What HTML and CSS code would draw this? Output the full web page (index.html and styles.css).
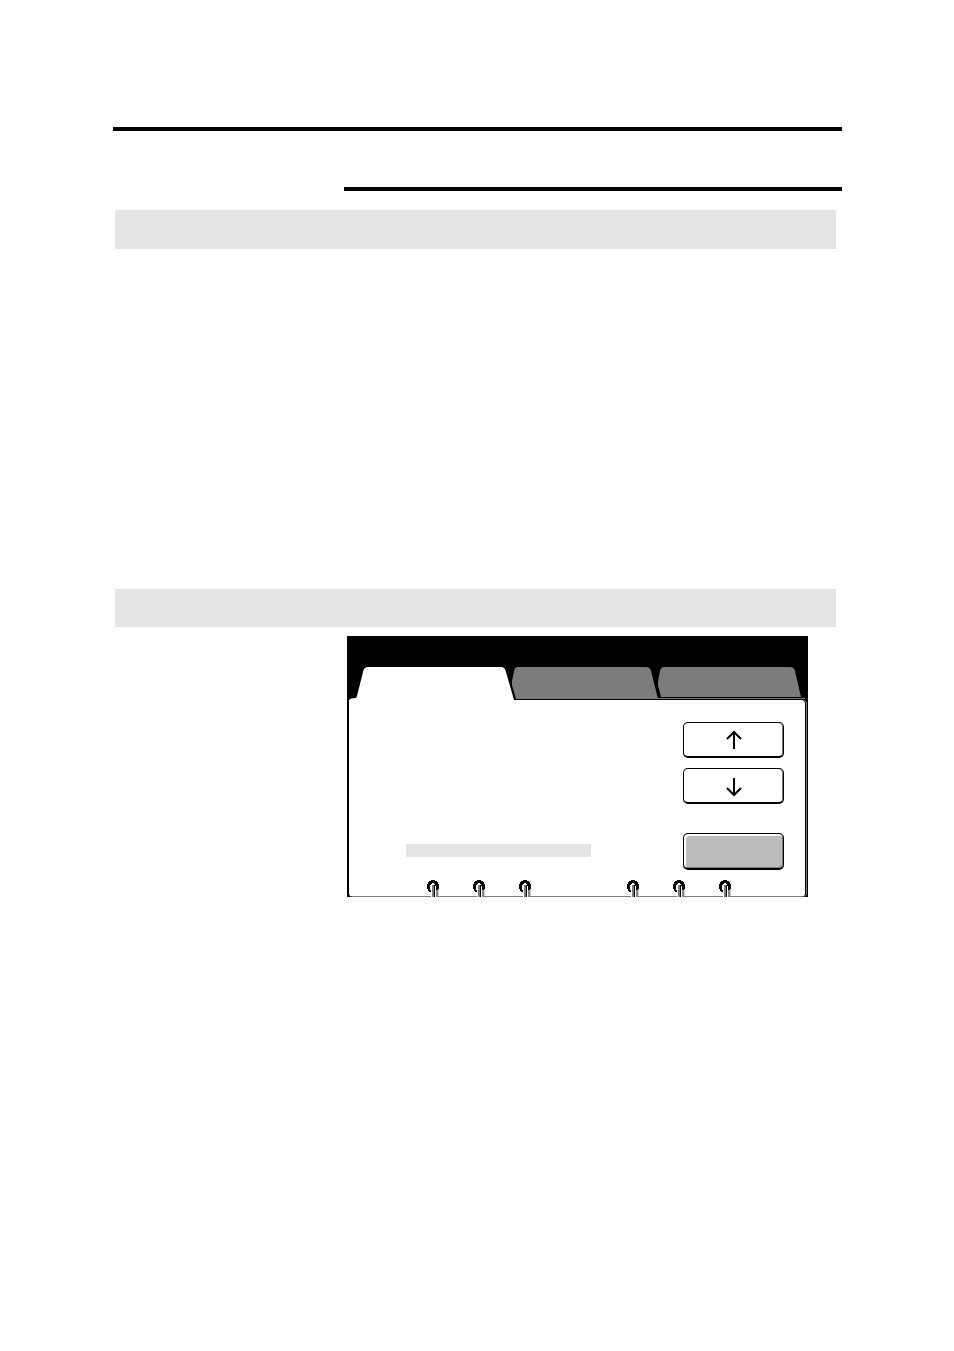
FILE: index.html
```html
<!DOCTYPE html>
<html lang="en">
<head>
<meta charset="utf-8">
<meta name="viewport" content="width=device-width, initial-scale=1">
<title>Control panel</title>
<link rel="stylesheet" href="styles.css">
</head>
<body>
<main class="page">
  <hr class="rule">
  <hr class="rule rule-short">
  <section class="section section-first"><div class="band"></div></section>
  <section class="section">
    <div class="band band-low"></div>
    <div class="panel">
      <div class="tabs" role="tablist">
        <button class="tab tab-one" role="tab" aria-selected="true" aria-label="Tab 1">
          <svg viewBox="0 0 166 33" preserveAspectRatio="none"><path fill="#fff" d="M0 33Q1 31 7 31L8 29L14 5Q15 0 19 0H152Q156 0 157 5L165 33Z"/></svg>
        </button>
        <button class="tab tab-two" role="tab" aria-selected="false" aria-label="Tab 2">
          <svg viewBox="0 0 147 33" preserveAspectRatio="none"><path fill="#7c7c7c" d="M4 32L0 18V14L2 4Q3 0 6 0H134Q138 0 139 4L146 32Z"/></svg>
        </button>
        <button class="tab tab-three" role="tab" aria-selected="false" aria-label="Tab 3">
          <svg viewBox="0 0 150 33" preserveAspectRatio="none"><path fill="#7c7c7c" d="M3 30L0 18V14L2 4Q3 0 6 0H132Q136 0 137 4L143 30Z"/><path fill="#7c7c7c" d="M0 31H147V32H0Z"/></svg>
        </button>
      </div>
      <div class="screen">
        <div class="status"></div>
        <div class="keys">
          <button class="key" aria-label="Up"><svg class="arrow" viewBox="0 0 16 19"><path d="M8 19V2M1 9L8 2L15 9"/></svg></button>
          <button class="key key-down" aria-label="Down"><svg class="arrow" viewBox="0 0 16 19"><path d="M8 0V17M1 10L8 17L15 10"/></svg></button>
          <button class="key key-gray" aria-label="Select"></button>
        </div>
        <div class="hooks hooks-left">
          <svg class="hook" viewBox="0 0 12 17"><use href="#hook"/></svg>
          <svg class="hook" viewBox="0 0 12 17"><use href="#hook"/></svg>
          <svg class="hook" viewBox="0 0 12 17"><use href="#hook"/></svg>
        </div>
        <div class="hooks hooks-right">
          <svg class="hook" viewBox="0 0 12 17"><use href="#hook"/></svg>
          <svg class="hook" viewBox="0 0 12 17"><use href="#hook"/></svg>
          <svg class="hook" viewBox="0 0 12 17"><use href="#hook"/></svg>
        </div>
      </div>
    </div>
  </section>
</main>
<svg class="symbols" aria-hidden="true">
  <symbol id="hook" viewBox="0 0 12 17">
    <g shape-rendering="crispEdges">
      <path fill="#fff" d="M4 5H9V17H4Z"/>
      <path fill="#7c7c7c" d="M5 5H7V17H5Z"/>
      <path fill="#000" d="M7 5H8V17H7Z"/>
      <path fill="#888" d="M9 9H11V17H9Z"/>
      <path fill="#ccc" d="M11 9H12V16H11Z"/>
      <path fill="#000" d="M4 0H8V1H10V2H11V4H12V9H11V10H9V6H8V4H7V3H5V4H4V5H3V10H4V12H2V11H1V9H0V4H1V2H2V1H4Z"/>
    </g>
  </symbol>
</svg>
</body>
</html>
```
FILE: styles.css
```css
* {
  box-sizing: border-box;
}

body {
  margin: 0;
  background: #fff;
  font-family: "Liberation Sans", sans-serif;
}

.page {
  padding: 127px 112px 0 113px;
}

.rule {
  height: 4px;
  margin: 0 0 56px;
  border: 0;
  background: #000;
}

.rule-short {
  margin: 0 0 19px 231px;
}

.section {
  margin: 0 6px 0 2px;
}

.section-first {
  min-height: 379px;
}

.band {
  height: 39px;
  background: #e4e4e6;
}

.band-low {
  height: 38px;
}

.panel {
  margin: 9px 28px 0 232px;
  padding-top: 31px;
  border-left: 2px solid #000;
  background: #000;
}

.tabs {
  display: flex;
  height: 33px;
}

.tab {
  min-width: 0;
  padding: 0;
  border: 0;
  background: none;
}

.tab svg {
  display: block;
  width: 100%;
  height: 33px;
}

.tab-one {
  flex: 166 1 0;
}

.tab-two {
  flex: 147 1 0;
  margin-left: -3px;
}

.tab-three {
  flex: 150 1 0;
  margin-left: -1px;
}

.screen {
  display: grid;
  grid-template-columns: 1fr 101px;
  grid-template-rows: 180px 17px;
  padding: 0 21px 0 0;
  margin-right: 3px;
  border-radius: 0 4px 4px 4px;
  background: linear-gradient(#7c7c7c, #7c7c7c) bottom / 100% 1px no-repeat #fff;
  box-shadow: 1px 0 0 #000, 2px 0 0 #7c7c7c;
}

.status {
  align-self: end;
  height: 13px;
  margin: 0 92px 23px 57px;
  background: #e4e4e6;
}

.keys {
  display: flex;
  flex-direction: column;
  gap: 10px;
  padding-top: 22px;
}

.key {
  display: flex;
  align-items: center;
  justify-content: center;
  height: 36px;
  padding: 0;
  border: 1px solid #000;
  border-bottom-width: 2px;
  border-radius: 5px;
  background: #fff;
  box-shadow: inset -1px 0 0 #7c7c7c;
}

.key-down {
  padding-top: 3px;
}

.key-gray {
  height: 37px;
  margin-top: 19px;
  background: #bcbcbc;
  box-shadow: inset -1px -1px 0 #7c7c7c, inset 2px 2px 0 #fff;
}

.arrow {
  width: 16px;
  height: 19px;
  fill: none;
  stroke: #000;
  stroke-width: 2;
}

.hooks {
  display: flex;
  grid-row: 2;
  grid-column: 1 / -1;
  gap: 34px;
}

.hooks-left {
  margin-left: 78px;
}

.hooks-right {
  justify-content: flex-end;
  margin-right: 53px;
}

.hook {
  width: 12px;
  height: 17px;
}

.symbols {
  display: none;
}
```
